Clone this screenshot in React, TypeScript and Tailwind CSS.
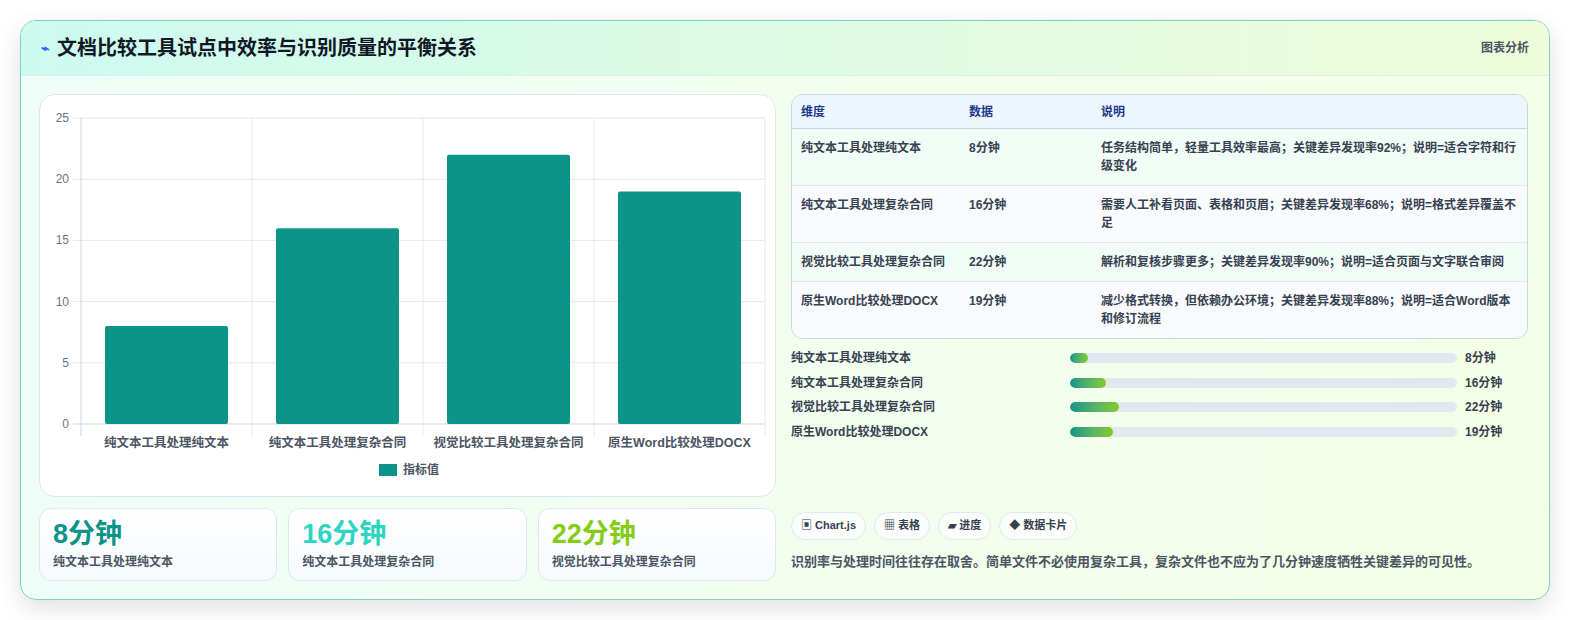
import React from "react";

const F = '"Liberation Sans", "Noto Sans CJK SC", sans-serif';
const bars = [
  { l: "纯文本工具处理纯文本", v: 8 },
  { l: "纯文本工具处理复杂合同", v: 16 },
  { l: "视觉比较工具处理复杂合同", v: 22 },
  { l: "原生Word比较处理DOCX", v: 19 },
];
const rows = [
  ["纯文本工具处理纯文本", "8分钟", "任务结构简单，轻量工具效率最高；关键差异发现率92%；说明=适合字符和行级变化", "bg-[#f2fcf6]"],
  ["纯文本工具处理复杂合同", "16分钟", "需要人工补看页面、表格和页眉；关键差异发现率68%；说明=格式差异覆盖不足", "bg-[#f8fafc]"],
  ["视觉比较工具处理复杂合同", "22分钟", "解析和复核步骤更多；关键差异发现率90%；说明=适合页面与文字联合审阅", "bg-[#f2fcf6]"],
  ["原生Word比较处理DOCX", "19分钟", "减少格式转换，但依赖办公环境；关键差异发现率88%；说明=适合Word版本和修订流程", "bg-[#f8fafc]"],
];

function Chart() {
  const top = 23, bot = 329, left = 41, right = 725;
  const u = (bot - top) / 25;
  const cw = (right - left) / 4;
  return (
    <svg width="737" height="400" style={{ fontFamily: F }}>
      {[0, 5, 10, 15, 20, 25].map((t) => (
        <g key={t}>
          <line x1={left - 8} x2={right} y1={bot - t * u} y2={bot - t * u} stroke={t === 0 ? "#cbd5e1" : "#e5e7eb"} />
          <text x={29} y={bot - t * u + 4} textAnchor="end" fontSize="12" fill="#6b7280">{t}</text>
        </g>
      ))}
      {[0, 1, 2, 3, 4].map((i) => (
        <line key={i} x1={left + i * cw} x2={left + i * cw} y1={top} y2={bot + 12} stroke={i === 0 ? "#cbd5e1" : "#e5e7eb"} />
      ))}
      {bars.map((b, i) => (
        <g key={i}>
          <rect x={left + i * cw + 24} y={bot - b.v * u} width={123} height={b.v * u} fill="#0d9488" rx="2" />
          <text x={left + i * cw + cw / 2} y={352} textAnchor="middle" fontSize="12.5" fontWeight="bold" fill="#4b5563">{b.l}</text>
        </g>
      ))}
      <rect x={339} y={369} width={18} height={12} fill="#0d9488" />
      <text x={363} y={379} fontSize="12" fontWeight="bold" fill="#4b5563">指标值</text>
    </svg>
  );
}

export default function App() {
  return (
    <div className="w-[1570px] h-[620px] bg-white p-5" style={{ fontFamily: F }}>
      <div className="rounded-2xl border border-[#7dd3c0] overflow-hidden shadow-[0_8px_24px_rgba(0,0,0,0.12)] bg-gradient-to-r from-[#effdf8] to-[#f5fee6]">
        <div className="h-[55px] flex items-center justify-between px-5 bg-gradient-to-r from-[#cdfaef] to-[#eefcd9] border-b border-[#d6f3ea]">
          <div className="flex items-center gap-2">
            <span className="text-[#2563eb] text-sm font-bold">⌁</span>
            <span className="text-[20px] font-bold text-[#111827]">文档比较工具试点中效率与识别质量的平衡关系</span>
          </div>
          <span className="text-xs font-semibold text-[#4b5563]">图表分析</span>
        </div>
        <div className="flex gap-[15px] p-[18px] pb-[18px]">
          <div className="w-[737px] flex flex-col gap-[11px]">
            <div className="h-[403px] bg-white rounded-2xl border border-[#dfe7ee]">
              <Chart />
            </div>
            <div className="flex gap-[11px]">
              {[["8分钟", "text-[#0d9488]", "纯文本工具处理纯文本"], ["16分钟", "text-[#2dd4bf]", "纯文本工具处理复杂合同"], ["22分钟", "text-[#84cc16]", "视觉比较工具处理复杂合同"]].map(([v, c, l]) => (
                <div key={v} className="flex-1 h-[73px] rounded-xl border border-[#dbe8f0] bg-gradient-to-b from-white to-[#f6fafd] px-[13px] pt-[8px]">
                  <div className={`text-[27px] font-bold leading-[34px] ${c}`}>{v}</div>
                  <div className="text-xs font-semibold text-[#4b5563] mt-[3px]">{l}</div>
                </div>
              ))}
            </div>
          </div>
          <div className="w-[737px] flex flex-col">
            <div className="rounded-xl border border-[#cbd5e1] overflow-hidden text-xs font-bold text-[#374151]">
              <div className="flex h-[34px] items-center bg-[#edf5fd] text-[#1e3a8a] border-b border-[#cbd5e1]">
                <div className="w-[177px] pl-[9px]">维度</div>
                <div className="w-[132px]">数据</div>
                <div className="flex-1">说明</div>
              </div>
              {rows.map((r, i) => (
                <div key={i} className={`flex py-[10px] leading-[18px] ${r[3]} ${i < 3 ? "border-b border-[#e2e8f0]" : ""}`}>
                  <div className="w-[177px] pl-[9px] shrink-0">{r[0]}</div>
                  <div className="w-[132px] shrink-0">{r[1]}</div>
                  <div className="flex-1 pr-2">{r[2]}</div>
                </div>
              ))}
            </div>
            <div className="flex flex-col gap-[6px] mt-[10px]">
              {bars.map((b) => (
                <div key={b.l} className="flex items-center h-[18.5px] text-xs font-bold text-[#374151]">
                  <div className="w-[279px]">{b.l}</div>
                  <div className="w-[387px] h-[10px] rounded-full bg-[#e2e8f0] overflow-hidden">
                    <div className="h-full rounded-full bg-gradient-to-r from-[#0d9488] to-[#84cc16]" style={{ width: `${b.v * 2.24}px` }} />
                  </div>
                  <div className="ml-2">{b.v}分钟</div>
                </div>
              ))}
            </div>
            <div className="flex-1" />
            <div className="flex gap-2 text-[11px] font-bold text-[#374151]">
              {["▣ Chart.js", "▦ 表格", "▰ 进度", "◆ 数据卡片"].map((t) => (
                <span key={t} className="h-[28px] px-[9px] flex items-center rounded-full border border-[#e2e8f0] bg-[#fbfdfb]">{t}</span>
              ))}
            </div>
            <div className="text-[13px] text-[#4b5563] mt-[12px] mb-[10px] font-semibold">识别率与处理时间往往存在取舍。简单文件不必使用复杂工具，复杂文件也不应为了几分钟速度牺牲关键差异的可见性。</div>
          </div>
        </div>
      </div>
    </div>
  );
}
